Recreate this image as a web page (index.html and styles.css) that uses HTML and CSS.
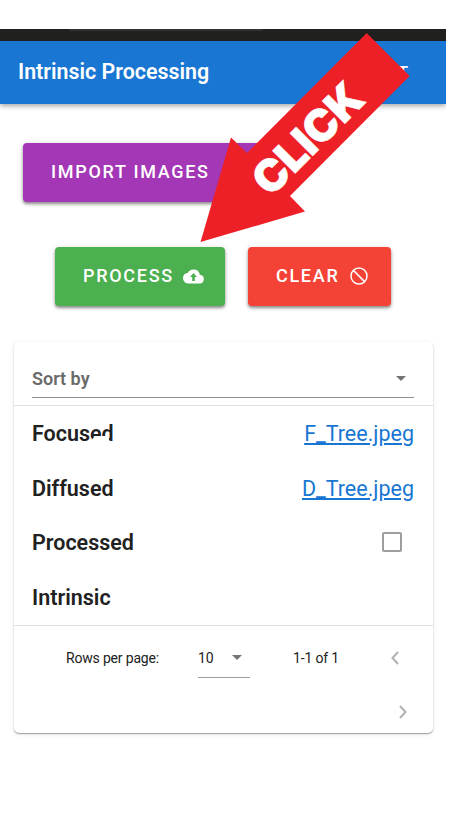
FILE: index.html
```html
<!DOCTYPE html>
<html lang="en">
<head>
<meta charset="utf-8">
<title>Intrinsic Processing</title>
<link rel="stylesheet" href="styles.css">
</head>
<body>
<div class="screen">
  <div class="status"><div class="address"></div></div>
  <header class="bar"><h1>Intrinsic Processing</h1><span class="logout">T</span></header>
  <main>
    <div class="actions">
      <button class="btn purple">IMPORT IMAGES</button>
    </div>
    <div class="actions second">
      <button class="btn green"><span>PROCESS</span>
        <svg width="21" height="21" viewBox="0 0 24 24"><path fill="#fff" d="M19.35 10.04A7.49 7.49 0 0 0 12 4C9.11 4 6.6 5.64 5.35 8.04A5.99 5.99 0 0 0 0 14a6 6 0 0 0 6 6h13a5 5 0 0 0 .35-9.96zM13.500 12.500v4.500h-3v-4.500H8l4-4.500 4 4.500z"/></svg>
      </button>
      <button class="btn red"><span>CLEAR</span>
        <svg width="18" height="18" viewBox="0 0 18 18" fill="none" stroke="#fff" stroke-width="1.5"><circle cx="9" cy="9" r="8"/><path d="M3.4 3.4 14.6 14.6"/></svg>
      </button>
    </div>
    <section class="card">
      <div class="sort"><div class="select"><span>Sort by</span><i class="caret"></i></div></div>
      <div class="rows">
        <div class="row"><b class="focused">Focused</b><a href="#">F_Tree.jpeg</a></div>
        <div class="row"><b>Diffused</b><a href="#">D_Tree.jpeg</a></div>
        <div class="row"><b>Processed</b><i class="check"></i></div>
        <div class="row"><b>Intrinsic</b></div>
      </div>
      <footer class="pager">
        <div class="line">
          <span class="label">Rows per page:</span>
          <div class="count"><span>10</span><i class="caret"></i></div>
          <span class="range">1-1 of 1</span>
          <svg class="prev" width="8" height="14" viewBox="0 0 8 14"><path d="M7 1 1.5 7 7 13"/></svg>
        </div>
        <div class="line next">
          <svg width="8" height="14" viewBox="0 0 8 14"><path d="M1 1 6.5 7 1 13"/></svg>
        </div>
      </footer>
    </section>
  </main>
  <svg class="arrow" width="446" height="260" viewBox="0 0 446 260">
    <path fill="#ed2027" d="M200.5 242 231 137.500 247 153 366.700 33 409.700 76 290 196 305 211.500Z"/>
    <text transform="translate(270.500 198) rotate(-45)" textLength="136.500" lengthAdjust="spacingAndGlyphs">CLICK</text>
  </svg>
</div>
</body>
</html>
```
FILE: styles.css
```css
* { box-sizing: border-box; }
body { margin: 0; background: #fff; font-family: Roboto, sans-serif; color: #212121; }
.screen { position: relative; width: 446px; height: 840px; padding-top: 29px; overflow: hidden; }
.status { height: 12px; background: #20211f; padding-left: 69px; }
.address { width: 194px; height: 2px; background: #30332f; border-radius: 0 0 8px 8px; }
.bar { height: 63px; padding: 0 38px 2px 18px; display: flex; align-items: center; justify-content: space-between; background: #1976d2; color: #fff; box-shadow: 0 2px 5px rgba(0,0,0,.35); }
h1 { margin: 0; font-size: 21.4px; font-weight: 600; line-height: 30px; }
.logout { font-size: 17px; font-weight: 500; line-height: 24px; }
main { padding: 39px 13px 0; }
.actions { display: flex; padding-left: 10px; }
.second { padding-left: 42px; margin-top: 45px; gap: 23px; }
.btn { height: 59px; border: 0; border-radius: 4px; color: #fff; font: 500 18px/24px Roboto, sans-serif; letter-spacing: 1.7px; padding: 0 0 1px 28px; display: flex; align-items: center; box-shadow: 0 2px 3px rgba(0,0,0,.4), 0 1px 6px rgba(0,0,0,.12); }
.purple { width: 256px; background: #a437b5; }
.green { width: 170px; background: #4caf50; gap: 9px; }
.red { width: 143px; background: #f44336; gap: 11px; }
.card { margin: 36px 0 0 1px; height: 391px; border-radius: 5px; box-shadow: 0 1px 1px rgba(0,0,0,.32), 0 1px 4px rgba(0,0,0,.12); }
.sort { height: 64px; padding: 15px 19px 0 18px; border-bottom: 1px solid #e0e0e0; }
.select { height: 41px; padding: 2px 8px 0 0; display: flex; align-items: center; justify-content: space-between; border-bottom: 1px solid #919191; font-size: 18px; font-weight: 600; color: #6a6a6a; }
.caret { width: 0; border: 5.5px solid transparent; border-top-color: #757575; border-bottom: 0; }
.rows { height: 220px; border-bottom: 1px solid #e0e0e0; }
.row { height: 54.5px; padding: 1px 19px 0 18px; display: flex; align-items: center; justify-content: space-between; font-size: 21.5px; }
.row b { font-weight: 600; }
.row a { color: #1976d2; }
.focused { position: relative; }
.focused::after { content: ""; position: absolute; left: 59px; top: 15px; width: 18px; height: 10px; border-radius: 7px 4px 2px 2px; background: #fff; }
.check { width: 20px; height: 20px; margin: 0 12px 1px 0; border: 2px solid #9e9e9e; border-radius: 2px; }
.pager { padding-top: 12px; font-size: 14px; }
.line { display: flex; height: 40px; align-items: center; padding-left: 52px; }
.label { width: 132px; letter-spacing: -.18px; }
.count { width: 52px; height: 40px; display: flex; align-items: center; justify-content: space-between; padding-right: 8px; border-bottom: 1px solid #9e9e9e; }
.range { margin-left: 43px; width: 98px; letter-spacing: -.15px; }
.line svg { fill: none; stroke: #b0b0b0; stroke-width: 2; }
.next { height: 14px; margin-top: 27px; padding-left: 385px; }
.arrow { position: absolute; left: 0; top: 0; }
.arrow text { font: 900 44px Inter, sans-serif; fill: #fff; stroke: #fff; stroke-width: .6px; }
```
